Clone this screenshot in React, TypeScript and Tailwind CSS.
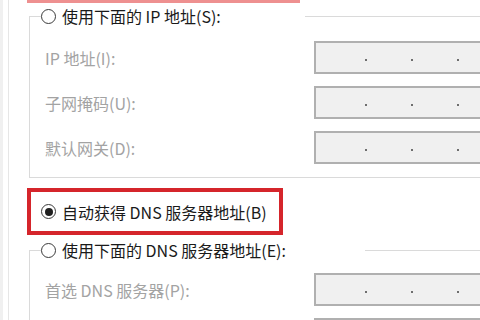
import type { ReactNode } from "react";

const font = { fontFamily: '"Noto Sans CJK SC", "Noto Sans", sans-serif' };

function Radio({ checked = false }: { checked?: boolean }) {
  return (
    <span className="flex h-[15px] w-[15px] shrink-0 items-center justify-center rounded-full border-[1.5px] border-[#3a3a3a] bg-white">
      {checked ? <span className="h-[8px] w-[8px] rounded-full bg-[#1f1f1f]" /> : null}
    </span>
  );
}

function RadioLabel({ checked, children, width }: { checked?: boolean; children: ReactNode; width: string }) {
  return (
    <div className={`flex h-[20px] items-center gap-[6px] ${width}`}>
      <Radio checked={checked} />
      <span className="whitespace-nowrap text-[16px] leading-none text-[#1a1a1a]">{children}</span>
    </div>
  );
}

function IpBox() {
  return (
    <div className="flex h-[33px] w-[200px] items-center gap-[44px] border-2 border-[#b0b0b0] bg-[#f0f0f0] pl-[49px] pt-[5px]">
      <span className="h-[2px] w-[2px] bg-[#6e6e6e]" />
      <span className="h-[2px] w-[2px] bg-[#6e6e6e]" />
      <span className="h-[2px] w-[2px] bg-[#6e6e6e]" />
    </div>
  );
}

function Row({ label }: { label?: string }) {
  return (
    <div className="grid h-[33px] shrink-0 grid-cols-[269px_200px] items-center pl-[15px]">
      <span className="whitespace-nowrap text-[16px] leading-none text-[#a3a3a3]">{label}</span>
      <IpBox />
    </div>
  );
}

export default function App() {
  return (
    <div className="flex h-[320px] w-[480px] overflow-hidden bg-white" style={font}>
      <div className="h-full w-[9px] shrink-0 border-l-[3px] border-r border-l-[#f0f0f0] border-r-[#e6e6e6]" />
      <div className="flex w-[520px] shrink-0 flex-col">
        <div className="ml-[18px] h-[3px] w-[273px] shrink-0 bg-[#ee9090]" />

        <fieldset className="ml-[20px] mt-[3px] w-[500px] shrink-0 border-b border-l border-t border-[#dadada] border-r-0 pb-[13px]">
          <legend className="ml-[11px]">
            <RadioLabel width="w-[264px]">使用下面的 IP 地址(S):</RadioLabel>
          </legend>
          <div className="flex flex-col gap-[12px] pt-[15px]">
            <Row label="IP 地址(I):" />
            <Row label="子网掩码(U):" />
            <Row label="默认网关(D):" />
          </div>
        </fieldset>

        <div className="ml-[18px] mt-[10px] flex h-[47px] w-[256px] shrink-0 items-center border-4 border-[#d5252b] pl-[10px]">
          <RadioLabel checked width="w-auto">自动获得 DNS 服务器地址(B)</RadioLabel>
        </div>

        <fieldset className="ml-[20px] mt-[5px] w-[500px] shrink-0 border-l border-t border-[#dadada] border-r-0 border-b-0">
          <legend className="ml-[11px]">
            <RadioLabel width="w-[324px]">使用下面的 DNS 服务器地址(E):</RadioLabel>
          </legend>
          <div className="flex flex-col gap-[12px] pt-[13px]">
            <Row label="首选 DNS 服务器(P):" />
            <Row />
          </div>
        </fieldset>
      </div>
    </div>
  );
}
